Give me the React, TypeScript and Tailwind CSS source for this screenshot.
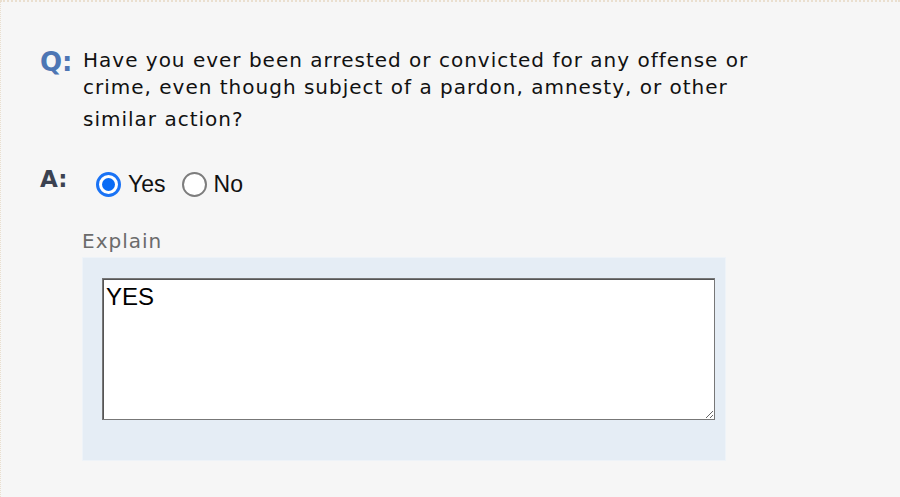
import { useState } from "react"

function Radio({ checked, label, onSelect }: { checked: boolean; label: string; onSelect: () => void }) {
  return (
    <label className="flex cursor-pointer items-center gap-[7px]" onClick={onSelect}>
      {checked ? (
        <span className="flex h-[25px] w-[25px] items-center justify-center rounded-full border-[3px] border-[#1a73f5] bg-white">
          <span className="h-[13px] w-[13px] rounded-full bg-[#0a6cf5]" />
        </span>
      ) : (
        <span className="h-[25px] w-[25px] rounded-full border-2 border-[#7d7d7d] bg-white" />
      )}
      <span className="text-[23px] leading-[26px] text-[#111]">{label}</span>
    </label>
  )
}

export default function App() {
  const [answer, setAnswer] = useState<"yes" | "no">("yes")
  const [explain, setExplain] = useState("YES")

  return (
    <div className="h-[497px] w-[900px] overflow-hidden bg-[#f6f6f6] font-['Liberation_Sans',Arial,sans-serif]">
      <div className="h-full border-l border-t-2 border-dotted border-[#eadfcf] pl-[39px] pt-[45px]">
        <div className="flex">
          <span className="w-[43px] font-['DejaVu_Sans',Verdana,sans-serif] text-[26px] font-bold leading-[30px] text-[#4d76b4]">
            Q:
          </span>
          <div className="font-['DejaVu_Sans',Verdana,sans-serif] text-[20px] tracking-[1px] text-[#111]">
            <div className="leading-[27px]">Have you ever been arrested or convicted for any offense or</div>
            <div className="leading-[27px]">crime, even though subject of a pardon, amnesty, or other</div>
            <div className="mt-[5px] leading-[27px]">similar action?</div>
          </div>
        </div>

        <div className="mt-[33px] flex">
          <span className="w-[56px] font-['DejaVu_Sans',Verdana,sans-serif] text-[23px] font-bold leading-[26px] text-[#3b4251]">
            A:
          </span>
          <div className="mt-[5px] flex items-center gap-[16px]">
            <Radio checked={answer === "yes"} label="Yes" onSelect={() => setAnswer("yes")} />
            <Radio checked={answer === "no"} label="No" onSelect={() => setAnswer("no")} />
          </div>
        </div>

        <div className="ml-[42px] mt-[33px]">
          <div className="font-['DejaVu_Sans',Verdana,sans-serif] text-[20px] leading-[22px] tracking-[1px] text-[#6b6b6b]">
            Explain
          </div>
          <div className="mt-[5px] w-[644px] border border-[#eef3f8] bg-[#e5edf5] pb-[40px] pl-[19px] pt-[20px]">
            <textarea
              value={explain}
              onChange={(e) => setExplain(e.target.value)}
              className="block h-[142px] w-[613px] border border-[#777] bg-white px-[3px] pb-[2px] pt-[4px] text-[24px] leading-[28px] text-black shadow-[inset_1px_1px_0_#555] outline-none"
            />
          </div>
        </div>
      </div>
    </div>
  )
}
